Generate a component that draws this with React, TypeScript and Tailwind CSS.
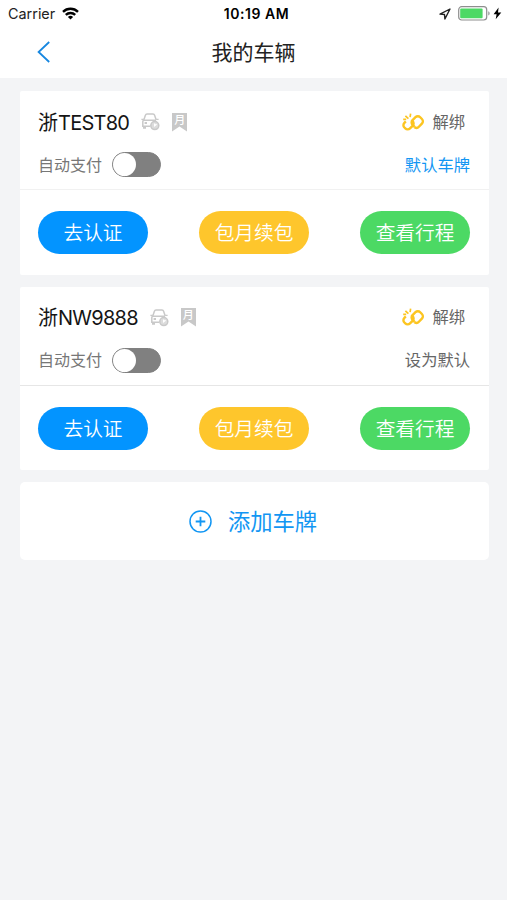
import { useState } from "react";

type Vehicle = {
  plate: string;
  isDefault: boolean;
};

const vehicles: Vehicle[] = [
  { plate: "TEST80", isDefault: true },
  { plate: "NW9888", isDefault: false },
];

function StatusBar() {
  return (
    <div className="flex h-7 items-center justify-between pl-2 pr-[5px] text-black">
      <div className="flex w-40 items-center">
        <span className="text-[14.4px] leading-none text-[#222]">Carrier</span>
        <svg className="ml-[7px] mb-px" width="17" height="13" viewBox="0 0 17 13">
          <g fill="none" stroke="#000" strokeWidth="2.4">
            <path d="M1 4.8a10.8 10.8 0 0 1 15 0" />
            <path d="M3.8 7.9a6.8 6.8 0 0 1 9.4 0" />
          </g>
          <path d="M8.5 12.6 5.9 10a3.8 3.8 0 0 1 5.2 0Z" />
        </svg>
      </div>
      <span className="pb-px pl-[3px] text-[14px] font-semibold leading-none tracking-[0.55px]">
        10:19 AM
      </span>
      <div className="flex w-40 items-center justify-end pb-px">
        <svg width="12" height="12" viewBox="0 0 12 12">
          <path
            d="M11 1 1 6.1l4.5.4.4 4.5Z"
            fill="none"
            stroke="#222"
            strokeWidth="1.4"
            strokeLinejoin="round"
          />
        </svg>
        <svg className="ml-[7px]" width="33" height="15" viewBox="0 0 33 15">
          <rect x="0.7" y="0.7" width="28" height="13.3" rx="3" fill="#fff" stroke="#8e8e8e" strokeWidth="1.2" />
          <rect x="2.2" y="2.4" width="22.4" height="9.9" rx="1" fill="#4cd964" />
          <path d="M30.3 5.2c1.8.7 1.8 3.6 0 4.3Z" fill="#8e8e8e" />
        </svg>
        <svg className="ml-0.5" width="9" height="13" viewBox="0 0 9 13">
          <path d="M5.6.5.6 7.2h3L2.7 12.3 8.3 5.4H5Z" />
        </svg>
      </div>
    </div>
  );
}

function CarIcon() {
  return (
    <svg width="19" height="18" viewBox="0 0 19 18" fill="none" stroke="#c9c9c9" strokeWidth="1.5">
      <path d="M2.8 7 4.4 2.2Q4.8 1 6 1h6q1.2 0 1.6 1.2L15.2 7" />
      <path d="M.4 6.3h2.4M17.6 6.3h-2.4" strokeWidth="1.2" />
      <path d="M9.4 13.2H1.8V8.6q0-1.3 1.3-1.3h12" />
      <path d="M2 14.6h3M3.6 10h2.4" strokeWidth="2.2" />
      <circle cx="13.8" cy="12.6" r="4" fill="#dcdcdc" />
      <path d="M13.6 10.4v2.4l2-1.6" stroke="#fff" strokeWidth="1.2" />
    </svg>
  );
}

function MonthIcon() {
  return (
    <span className="relative flex h-[19px] w-[15px] justify-center">
      <svg className="absolute inset-0" width="15" height="19" viewBox="0 0 15 19">
        <path d="M0 0h15v18.5l-7.5-5L0 18.5Z" fill="#c8c8c8" />
      </svg>
      <span className="relative text-[11px] font-medium leading-[14px] text-white">月</span>
    </span>
  );
}

function UnlinkIcon() {
  return (
    <svg width="22" height="19" viewBox="0 0 22 19" fill="none" stroke="#fcc521" strokeWidth="2.4">
      <path d="M3.8 8.4 2.4 9.8a3.3 3.3 0 0 0 0 4.7l.9.9a3.3 3.3 0 0 0 4.7 0l2.6-2.6a3.3 3.3 0 0 0 0-4.7L9.4 7" />
      <path d="m12.6 14.2.2.2a3.3 3.3 0 0 0 4.1-.6l3-3.2a3.3 3.3 0 0 0 0-4.6l-1.7-1.8a3.3 3.3 0 0 0-4.7 0L10.6 7.1a3.3 3.3 0 0 0 0 4.7l2 2" />
      <path d="M3.4 2.9 6.4 5.7M8.6.6 8.1 4.2M1.2 6.4h3" strokeWidth="1.7" />
    </svg>
  );
}

function Toggle() {
  const [on, setOn] = useState(false);

  return (
    <button
      role="switch"
      aria-checked={on}
      aria-label="自动支付"
      onClick={() => setOn(!on)}
      className={`flex h-[25px] w-[49px] rounded-full border border-[#808080] ${
        on ? "justify-end bg-[#4cd964]" : "bg-[#808080]"
      }`}
    >
      <span className="size-[23px] rounded-full bg-white" />
    </button>
  );
}

function VehicleCard({ plate, isDefault }: Vehicle) {
  const action =
    "h-[43px] w-[110px] rounded-full pt-[3px] text-[19.7px] font-[350] text-white whitespace-nowrap";

  return (
    <section className="h-[183.5px] rounded-[2px] bg-white">
      <div
        className={`flex h-[99px] flex-col border-b pl-[18px] pr-[19px] pt-4 ${
          isDefault ? "border-[#f1f1f1]" : "border-[#e6e6e6]"
        }`}
      >
        <div className="flex h-[30px] items-center justify-between">
          <div className="flex items-center">
            <h2 className="pt-px text-[20px] leading-[30px] text-[#151515]">
              浙<span className="tracking-[-0.75px]">{plate}</span>
            </h2>
            <span className="ml-3 flex items-center gap-3">
              <CarIcon />
              <MonthIcon />
            </span>
          </div>
          <button className="flex items-center gap-2 pr-[5px] text-[16.3px] text-[#666]">
            <UnlinkIcon />
            解绑
          </button>
        </div>
        <div className="mt-[14px] flex h-[27px] items-center justify-between text-[16px] text-[#777]">
          <div className="flex items-center gap-[10px]">
            <span>自动支付</span>
            <Toggle />
          </div>
          <button className={`pt-px text-[16.3px] ${isDefault ? "text-[#1296f3]" : "text-[#666]"}`}>
            {isDefault ? "默认车牌" : "设为默认"}
          </button>
        </div>
      </div>
      <div className="flex justify-between pl-[18px] pr-[19px] pt-[21px]">
        <button className={`${action} bg-[#0394ff]`}>去认证</button>
        <button className={`${action} bg-[#fec62c]`}>包月续包</button>
        <button className={`${action} bg-[#4cd964]`}>查看行程</button>
      </div>
    </section>
  );
}

export default function App() {
  return (
    <div className="min-h-screen bg-[#f3f4f6] font-[Inter,'Noto_Sans_CJK_SC',sans-serif]">
      <header className="h-[78px] bg-white">
        <StatusBar />
        <div className="grid h-12 grid-cols-[1fr_auto_1fr] items-center">
          <button aria-label="返回" className="ml-[37px] w-fit">
            <svg width="13" height="22" viewBox="0 0 13 22">
              <path d="M12.2 1 1.6 11l10.6 10" fill="none" stroke="#1787e0" strokeWidth="1.8" />
            </svg>
          </button>
          <h1 className="text-[21px] leading-none text-[#222]">我的车辆</h1>
        </div>
      </header>

      <main className="flex flex-col gap-3 pb-6 pl-5 pr-[18px] pt-[13px]">
        {vehicles.map((vehicle) => (
          <VehicleCard key={vehicle.plate} {...vehicle} />
        ))}
        <button className="flex h-[78px] items-center justify-center gap-4 rounded-[5px] bg-white pr-[3px] text-[22.3px] text-[#1296f3]">
          <svg width="23" height="23" viewBox="0 0 23 23" fill="none" stroke="#1296f3" strokeWidth="1.5">
            <circle cx="11.5" cy="11.5" r="10.5" />
            <path d="M11.5 6.7v9.6M6.7 11.5h9.6" strokeWidth="1.8" />
          </svg>
          <span className="pt-0.5">添加车牌</span>
        </button>
      </main>
    </div>
  );
}
